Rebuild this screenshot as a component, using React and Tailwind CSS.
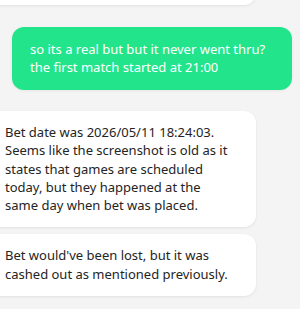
const messages = [
  { from: "bot", text: "Previous message", hidden: true },
  { from: "user", text: "so its a real but but it never went thru?\nthe first match started at 21:00" },
  {
    from: "bot",
    text: "Bet date was 2026/05/11 18:24:03. Seems like the screenshot is old as it states that games are scheduled today, but they happened at the same day when bet was placed.",
  },
  { from: "bot", text: "Bet would've been lost, but it was cashed out as mentioned previously." },
];

const App = () => {
  return (
    <div className="w-[300px] h-[309px] overflow-hidden bg-[#f4f4f4] font-['Noto_Sans',sans-serif] text-[13px] leading-[18.4px]">
      <div className="flex flex-col mt-[-60px]">
        <div className="h-[65px] w-[268px] ml-[-12px] bg-white rounded-xl shadow-[0_1px_3px_rgba(0,0,0,0.08)]" />

        <div className="mt-[22px] mx-[8px] ml-[12px] bg-[#22e58b] text-white rounded-xl px-[18px] py-[13px] whitespace-pre-line shadow-[0_1px_3px_rgba(0,0,0,0.06)]">
          {messages[1].text}
        </div>

        <div className="mt-[21px] w-[268px] ml-[-12px] bg-white text-[#242424] rounded-xl pl-[17px] pr-[20px] py-[12px] shadow-[0_1px_3px_rgba(0,0,0,0.08)]">
          {messages[2].text}
        </div>

        <div className="mt-[7px] w-[268px] ml-[-12px] bg-white text-[#242424] rounded-xl pl-[17px] pr-[20px] py-[12.5px] shadow-[0_1px_3px_rgba(0,0,0,0.08)]">
          {messages[3].text}
        </div>
      </div>
    </div>
  );
};

export default App;
